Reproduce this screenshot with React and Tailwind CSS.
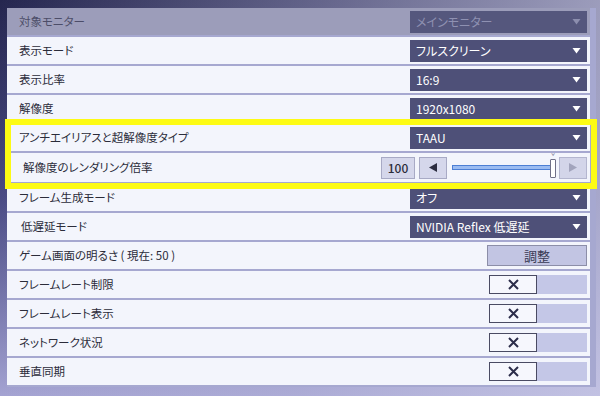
import React from "react";

const font = { fontFamily: '"Noto Sans CJK JP", "Noto Sans", sans-serif' };

function Arrow({ dim }) {
  return (
    <svg width="9" height="6" viewBox="0 0 9 6" className="shrink-0">
      <path d="M0.5 0 H8.5 L4.5 5.5 Z" fill={dim ? "#8c8eae" : "#ffffff"} />
    </svg>
  );
}

function Dropdown({ value, dim }) {
  return (
    <div
      className={`w-[177px] h-[22px] flex items-center justify-between pl-[6px] pr-[6px] text-[12px] ${
        dim ? "bg-[#55577d] text-[#8f91b2]" : "bg-[#4e5078] text-white"
      }`}
    >
      <span className="leading-none">{value}</span>
      <Arrow dim={dim} />
    </div>
  );
}

function Toggle() {
  return (
    <div className="flex h-[19px] w-[98px]">
      <div className="w-[48px] h-full bg-[#f6f7fd] border border-[#4a4b63] flex items-center justify-center">
        <svg width="11" height="11" viewBox="0 0 11 11">
          <path d="M1 1 L10 10 M10 1 L1 10" stroke="#2c2d4a" strokeWidth="2" />
        </svg>
      </div>
      <div className="flex-1 h-full bg-[#c4c7e7]" />
    </div>
  );
}

function Row({ label, children, grey, indent, tall, labelPad }) {
  return (
    <div
      className={`flex items-center justify-between ${tall ? "h-[29px]" : "h-[27px]"} pr-[3px] ${
        grey ? "bg-[#9c9dba]" : "bg-[#f3f5fc]"
      } ${indent ? "border-l-[4px] border-[#b2b4d2] pl-[12px]" : labelPad || "pl-[12px]"}`}
    >
      <span
        className={`text-[11.5px] leading-none ${grey ? "text-[#4c4d68]" : "text-[#2b2c3a]"}`}
      >
        {label}
      </span>
      {children}
    </div>
  );
}

function Slider() {
  return (
    <div className="flex items-center h-[22px]">
      <div className="w-[34px] h-[22px] bg-[#d5d7eb] border border-[#a8aac5] flex items-center justify-center text-[12px] text-[#2b2c3a] font-medium">
        100
      </div>
      <div className="ml-[4px] w-[28px] h-[22px] bg-[#d5d7eb] border border-[#a8aac5] flex items-center justify-center">
        <svg width="8" height="9" viewBox="0 0 8 9">
          <path d="M8 0 V9 L0 4.5 Z" fill="#2c2d40" />
        </svg>
      </div>
      <div className="ml-[5px] relative w-[104px] h-[22px] flex items-center">
        <div className="w-[99px] h-[5px] bg-[#9bbcf2] border border-[#4d7fd4]" />
        <div className="absolute left-[98px] top-[2px] w-[6px] h-[19px] bg-white border border-[#6f7088] rounded-[1px]" />
        <div className="absolute left-[99px] top-[-4px] text-[7px] leading-none text-[#6f7088]">ˇ</div>
      </div>
      <div className="ml-[3px] w-[28px] h-[22px] bg-[#d3d5e9] border border-[#b4b6cf] flex items-center justify-center">
        <svg width="8" height="9" viewBox="0 0 8 9">
          <path d="M0 0 V9 L8 4.5 Z" fill="#a2a4bc" />
        </svg>
      </div>
    </div>
  );
}

export default function App() {
  return (
    <div
      className="relative w-[600px] h-[396px] overflow-hidden bg-gradient-to-b from-[#25264f] via-[#4a4b84] to-[#a4a3d2] [font-feature-settings:'palt']"
      style={font}
    >
      <div className="absolute inset-0 bg-gradient-to-r from-transparent via-[#b9b9dc]/40 to-[#cfcfea]/70" />
      <div className="relative pt-[8px] pl-[7px] pr-[4px]">
        <div className="bg-[#a6a8d0] flex flex-col gap-[2px] pr-[6px] pb-[2px]">
          <Row label="対象モニター" grey>
            <Dropdown value="メインモニター" dim />
          </Row>
          <Row label="表示モード">
            <Dropdown value="フルスクリーン" />
          </Row>
          <Row label="表示比率">
            <Dropdown value="16:9" />
          </Row>
          <Row label="解像度">
            <Dropdown value="1920x1080" />
          </Row>
          <Row label="アンチエイリアスと超解像度タイプ">
            <Dropdown value="TAAU" />
          </Row>
          <Row label="解像度のレンダリング倍率" indent tall>
            <Slider />
          </Row>
          <Row label="フレーム生成モード">
            <Dropdown value="オフ" />
          </Row>
          <Row label="低遅延モード" labelPad="pl-[14px]">
            <Dropdown value="NVIDIA Reflex 低遅延" />
          </Row>
          <Row label="ゲーム画面の明るさ ( 現在: 50 )">
            <div className="w-[100px] h-[21px] bg-[#c2c5e3] border border-[#8c8ea8] flex items-center justify-center text-[13px] text-[#3a3b55]">
              調整
            </div>
          </Row>
          <Row label="フレームレート制限">
            <Toggle />
          </Row>
          <Row label="フレームレート表示">
            <Toggle />
          </Row>
          <Row label="ネットワーク状況">
            <Toggle />
          </Row>
          <Row label="垂直同期">
            <Toggle />
          </Row>
        </div>
      </div>
      <div className="absolute left-[5px] top-[119px] w-[592px] h-[70px] border-[6px] border-[#fdfb14] pointer-events-none" />
    </div>
  );
}
